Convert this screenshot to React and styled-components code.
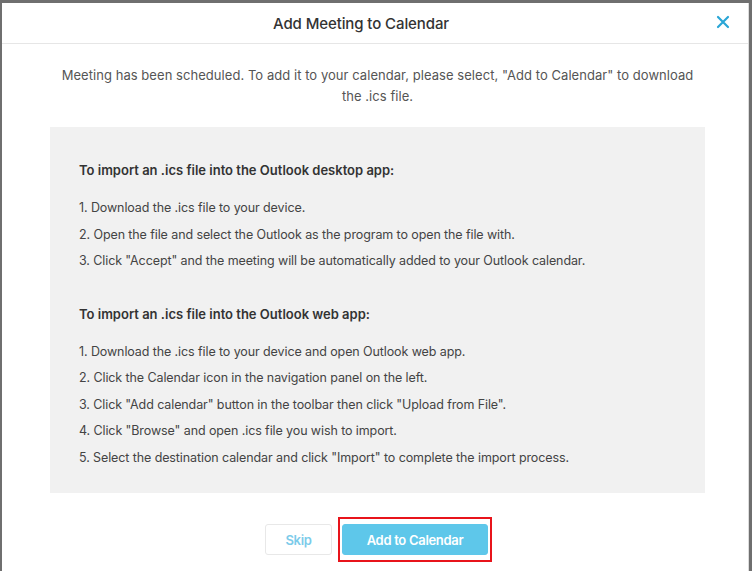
import React from "react";
import styled, { createGlobalStyle } from "styled-components";

const GlobalStyle = createGlobalStyle`
  html, body {
    margin: 0;
    padding: 0;
    background: #6f6f6f;
  }
  body {
    font-family: Inter, "Noto Sans", "Liberation Sans", sans-serif;
  }
`;

const Modal = styled.div`
  margin: 3px 0 0 2px;
  width: 746px;
  height: 568px;
  background: #fff;
  border-right: 1px solid #dcdcdc;
  display: flex;
  flex-direction: column;
`;

const Header = styled.div`
  height: 40px;
  border-bottom: 1px solid #e6e6e6;
  display: flex;
  align-items: center;
  justify-content: center;
  padding-right: 28px;
  position: relative;
`;

const Title = styled.h2`
  margin: 0;
  font-size: 15px;
  font-weight: 500;
  color: #333;
  letter-spacing: -0.1px;
`;

const Close = styled.button`
  position: absolute;
  right: 18px;
  top: 12px;
  border: none;
  background: none;
  padding: 0;
  cursor: pointer;
  display: flex;
`;

const Body = styled.div`
  padding: 21px 43px 0 48px;
  display: flex;
  flex-direction: column;
`;

const Intro = styled.p`
  margin: 0 auto 20px;
  max-width: 640px;
  text-align: center;
  font-size: 13px;
  line-height: 21px;
  color: #555;
  letter-spacing: 0.05px;
`;

const InfoBox = styled.div`
  background: #f1f1f1;
  padding: 34px 29px 24px;
  height: 366px;
  box-sizing: border-box;
`;

const Section = styled.div`
  margin-bottom: 30px;
`;

const Heading = styled.h3`
  margin: 0 0 16px;
  font-size: 13px;
  font-weight: 600;
  color: #333;
  letter-spacing: 0;
  line-height: 18px;
`;

const Step = styled.p`
  margin: 0;
  font-size: 12.5px;
  line-height: 26.5px;
  color: #444;
  letter-spacing: -0.1px;
`;

const Footer = styled.div`
  display: flex;
  justify-content: center;
  align-items: center;
  gap: 6px;
  padding: 24px 0 0 2px;
`;

const Button = styled.button`
  height: 31px;
  border-radius: 3px;
  font-family: inherit;
  font-size: 13px;
  font-weight: 600;
  letter-spacing: -0.3px;
  cursor: pointer;
  border: 1px solid ${(p) => (p.$primary ? "#5ec7ea" : "#e8e8e8")};
  background: ${(p) => (p.$primary ? "#5ec7ea" : "#fff")};
  color: ${(p) => (p.$primary ? "#fff" : "#7ccbea")};
  width: ${(p) => p.$width}px;
`;

const Highlight = styled.div`
  border: 2px solid #e8141b;
  padding: 5px 2px;
  display: flex;
`;

const desktopSteps = [
  "1. Download the .ics file to your device.",
  "2. Open the file and select the Outlook as the program to open the file with.",
  '3. Click "Accept" and the meeting will be automatically added to your Outlook calendar.',
];

const webSteps = [
  "1. Download the .ics file to your device and open Outlook web app.",
  "2. Click the Calendar icon in the navigation panel on the left.",
  '3. Click "Add calendar" button in the toolbar then click "Upload from File".',
  '4. Click "Browse" and open .ics file you wish to import.',
  '5. Select the destination calendar and click "Import" to complete the import process.',
];

const App = () => {
  return (
    <>
      <GlobalStyle />
      <Modal>
        <Header>
          <Title>Add Meeting to Calendar</Title>
          <Close aria-label="Close">
            <svg width="14" height="14" viewBox="0 0 14 14">
              <path
                d="M2 2 L12 12 M12 2 L2 12"
                stroke="#2aa6d6"
                strokeWidth="2.2"
                strokeLinecap="round"
              />
            </svg>
          </Close>
        </Header>
        <Body>
          <Intro>
            Meeting has been scheduled. To add it to your calendar, please
            select, "Add to Calendar" to download the .ics file.
          </Intro>
          <InfoBox>
            <Section>
              <Heading>To import an .ics file into the Outlook desktop app:</Heading>
              {desktopSteps.map((s) => (
                <Step key={s}>{s}</Step>
              ))}
            </Section>
            <Section>
              <Heading>To import an .ics file into the Outlook web app:</Heading>
              {webSteps.map((s) => (
                <Step key={s}>{s}</Step>
              ))}
            </Section>
          </InfoBox>
          <Footer>
            <Button $width={67}>Skip</Button>
            <Highlight>
              <Button $primary $width={146}>
                Add to Calendar
              </Button>
            </Highlight>
          </Footer>
        </Body>
      </Modal>
    </>
  );
};

export default App;
